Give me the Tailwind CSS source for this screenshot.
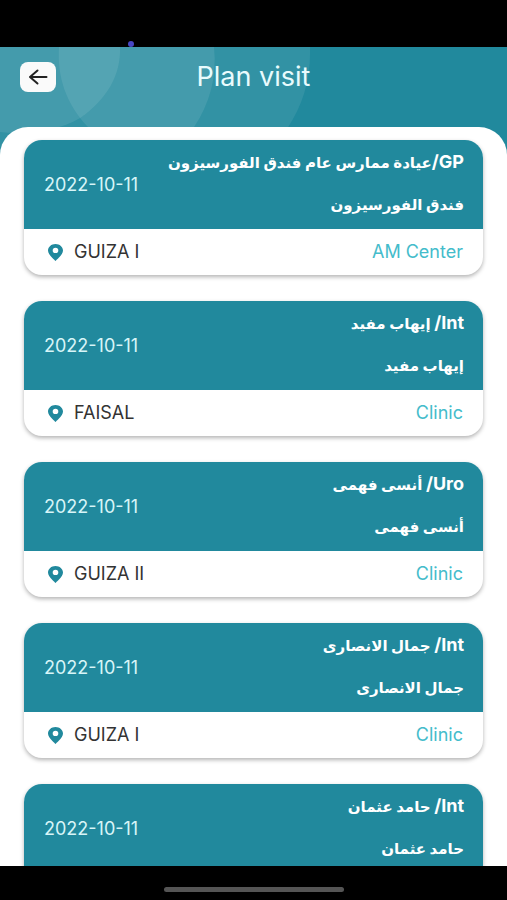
<!DOCTYPE html>
<html lang="en">
<head>
  <meta charset="UTF-8">
  <meta name="viewport" content="width=device-width, initial-scale=1.0">
  <title>Plan visit</title>
  <script src="https://cdn.jsdelivr.net/npm/@tailwindcss/browser@4"></script>
</head>
<body class="bg-black font-['Inter','DejaVu_Sans',sans-serif]">
  <div class="h-screen flex flex-col overflow-hidden">

    <!-- status bar -->
    <div class="relative h-[47px] shrink-0 bg-black">
      <span class="absolute left-32 bottom-0 size-1.5 rounded-full bg-[#4747c4]"></span>
    </div>

    <div class="relative flex-1 min-h-0 flex flex-col bg-[#21899d]">
      <svg class="absolute top-0 left-0" width="320" height="110" viewBox="0 0 320 110" fill="#fff" aria-hidden="true">
        <path d="M0 0H310C311 32 303 58 287 82L270 110H0Z" fill-opacity=".08" />
        <path d="M0 0H120C121 28 107 52 80 71C60 83 30 88 0 85Z" fill-opacity=".09" />
        <path d="M59 0H214C217 30 210 56 194 80H88C66 57 57 30 59 0Z" fill-opacity=".09" />
      </svg>

      <header class="relative h-20 shrink-0 flex items-start px-5 pt-[15px]">
        <button type="button" aria-label="Back" class="w-9 h-[30px] rounded-lg bg-[#fafafa] flex items-center justify-center">
          <svg width="20" height="16" viewBox="0 0 20 16" fill="none" stroke="#222" stroke-width="2" stroke-linecap="round" stroke-linejoin="round">
            <path d="M18.500 8H2M9.500 1.500L2 8L9.500 14.500" />
          </svg>
        </button>
        <h1 class="flex-1 pr-9 text-center text-[27px] leading-[30px] text-[#e9fbfd]">Plan visit</h1>
      </header>

      <main class="relative flex-1 min-h-0 overflow-y-auto [scrollbar-width:none] rounded-t-[28px] bg-white px-6 pt-[13px]">
        <ul id="visits" class="flex flex-col gap-[26px]"></ul>
      </main>
    </div>

    <!-- home indicator -->
    <div class="h-[34px] shrink-0 bg-black flex items-center justify-center pt-3">
      <span class="w-[180px] h-[5px] rounded-full bg-[#555]"></span>
    </div>
  </div>

  <template id="visit">
    <li class="shrink-0 rounded-[18px] overflow-hidden bg-white shadow-[0_2px_4px_rgba(0,0,0,0.3)]">
      <div class="h-[89px] flex items-center justify-between bg-[#21899d] pl-5 pr-[19px] text-white">
        <time class="text-lg text-[#d8f5f8]"></time>
        <div dir="rtl" class="pb-0.5 text-[15px] leading-[42px] font-bold whitespace-nowrap">
          <p><span class="specialty text-lg leading-none"></span><span class="title"></span></p>
          <p class="name"></p>
        </div>
      </div>
      <div class="h-[46px] flex items-center pl-6 pr-5 text-lg">
        <svg class="mr-[11px]" width="15" height="17" viewBox="0 0 15 17" fill="#21899d" aria-hidden="true">
          <path fill-rule="evenodd" d="M7.500 0C3.300 0 0 2.900 0 6.600C0 10.800 7.500 17 7.500 17S15 10.800 15 6.600C15 2.900 11.700 0 7.500 0ZM7.500 3.800A2.800 2.600 0 1 1 7.500 9A2.800 2.600 0 1 1 7.500 3.800Z" />
        </svg>
        <span class="area flex-1 text-[#333]"></span>
        <span class="place text-[#44bccb]"></span>
      </div>
    </li>
  </template>

  <script>
    const visits = [
      { date: "2022-10-11", specialty: "GP/", title: "عيادة ممارس عام فندق الفورسيزون", name: "فندق الفورسيزون", area: "GUIZA I", place: "AM Center" },
      { date: "2022-10-11", specialty: "Int/", title: " إيهاب مفيد", name: "إيهاب مفيد", area: "FAISAL", place: "Clinic" },
      { date: "2022-10-11", specialty: "Uro/", title: " أنسى فهمى", name: "أنسى فهمى", area: "GUIZA II", place: "Clinic" },
      { date: "2022-10-11", specialty: "Int/", title: " جمال الانصارى", name: "جمال الانصارى", area: "GUIZA I", place: "Clinic" },
      { date: "2022-10-11", specialty: "Int/", title: " حامد عثمان", name: "حامد عثمان", area: "GUIZA I", place: "Clinic" }
    ];

    const list = document.getElementById("visits");
    const template = document.getElementById("visit");

    visits.forEach((visit) => {
      const card = template.content.cloneNode(true);
      card.querySelector("time").textContent = visit.date;
      card.querySelector(".specialty").textContent = visit.specialty;
      card.querySelector(".title").textContent = visit.title;
      card.querySelector(".name").textContent = visit.name;
      card.querySelector(".area").textContent = visit.area;
      card.querySelector(".place").textContent = visit.place;
      list.appendChild(card);
    });
  </script>
</body>
</html>
